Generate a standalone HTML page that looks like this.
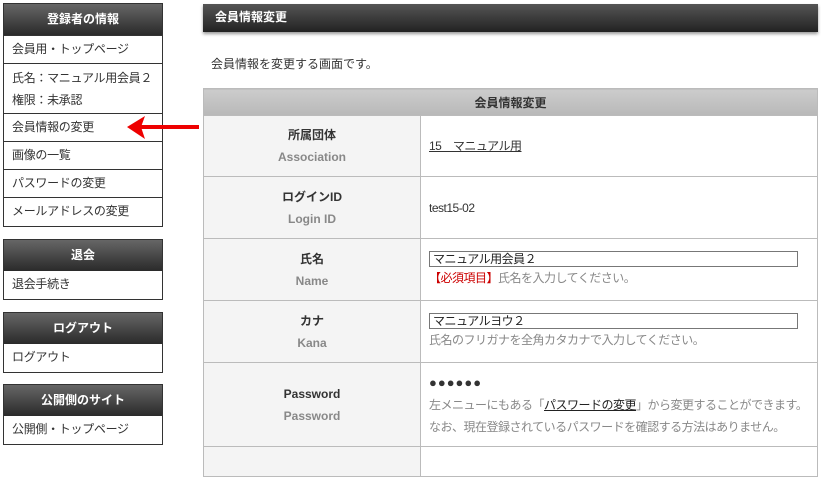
<!DOCTYPE html>
<html><head><meta charset="utf-8"><style>
*{margin:0;padding:0;box-sizing:border-box}
body{width:821px;height:461px;overflow:hidden;background:#fff;font-family:"Liberation Sans","Noto Sans CJK JP",sans-serif;font-size:12px;color:#333;position:relative;white-space:nowrap}
.box{position:absolute;left:3px;width:160px;border:1px solid #333;background:#fff}
.bh{background:linear-gradient(#666,#2a2a2a);color:#fff;font-weight:bold;text-align:center;height:31px;line-height:30px;font-size:12px}
.it{border-top:1px solid #333;padding:0 0 0 8px;line-height:27px;height:28px;letter-spacing:-0.3px}
.it:first-of-type{border-top:none}
.abs{position:absolute}
.mh{left:203px;top:4px;width:615px;height:28px;background:linear-gradient(#555,#222);color:#fff;font-weight:bold;line-height:27px;padding-left:12px;box-shadow:0 2px 3px #999}
table{position:absolute;left:203px;top:88px;width:614px;border-collapse:collapse;table-layout:fixed}
td,th{border:1px solid #bbb}
th.h{height:27px;background:linear-gradient(#ccc,#b8b8b8);font-weight:bold;text-align:center}
td.l{background:#f4f4f4;text-align:center;font-weight:bold;line-height:22px}
td.l span{color:#888;display:block}
td.r{padding-left:8px;line-height:22px;letter-spacing:-0.5px;overflow:hidden}
.inp{width:369px;height:16px;border:1px solid #777;line-height:14px;padding-left:3px;color:#222}
.g{color:#888}
</style></head><body>
<div class="box" style="top:3px;height:224px">
<div class="bh">登録者の情報</div>
<div class="it">会員用・トップページ</div>
<div class="it" style="height:50px;line-height:22px;padding-top:3px">氏名：マニュアル用会員２<br>権限：未承認</div>
<div class="it">会員情報の変更</div>
<div class="it">画像の一覧</div>
<div class="it">パスワードの変更</div>
<div class="it">メールアドレスの変更</div>
</div>
<div class="box" style="top:239px;height:61px"><div class="bh">退会</div><div class="it" style="border-top:none">退会手続き</div></div>
<div class="box" style="top:312px;height:61px"><div class="bh">ログアウト</div><div class="it" style="border-top:none">ログアウト</div></div>
<div class="box" style="top:384px;height:61px"><div class="bh">公開側のサイト</div><div class="it" style="border-top:none">公開側・トップページ</div></div>
<svg class="abs" style="left:125px;top:114px" width="76" height="28"><rect x="14" y="11" width="60" height="4" fill="#e00"/><path d="M2 13 L20 2 L16 13 L20 25 Z" fill="#e00"/></svg>
<div class="abs mh">会員情報変更</div>
<div class="abs" style="left:211px;top:55px">会員情報を変更する画面です。</div>
<table>
<colgroup><col style="width:217px"><col style="width:397px"></colgroup>
<tr><th class="h" colspan="2">会員情報変更</th></tr>
<tr style="height:61px"><td class="l">所属団体<span>Association</span></td><td class="r"><u>15　マニュアル用</u></td></tr>
<tr style="height:62px"><td class="l">ログインID<span>Login ID</span></td><td class="r">test15-02</td></tr>
<tr style="height:62px"><td class="l">氏名<span>Name</span></td><td class="r"><div class="inp">マニュアル用会員２</div><div class="g"><span style="color:#c00">【必須項目】</span>氏名を入力してください。</div></td></tr>
<tr style="height:62px"><td class="l">カナ<span>Kana</span></td><td class="r"><div class="inp">マニュアルヨウ２</div><div class="g">氏名のフリガナを全角カタカナで入力してください。</div></td></tr>
<tr style="height:84px"><td class="l">Password<span>Password</span></td><td class="r"><div style="letter-spacing:1px;font-size:13px">●●●●●●</div><div class="g">左メニューにもある「<u style="color:#222">パスワードの変更</u>」から変更することができます。</div><div class="g">なお、現在登録されているパスワードを確認する方法はありません。</div></td></tr>
<tr style="height:30px"><td class="l"></td><td class="r"></td></tr>
</table>
</body></html>
